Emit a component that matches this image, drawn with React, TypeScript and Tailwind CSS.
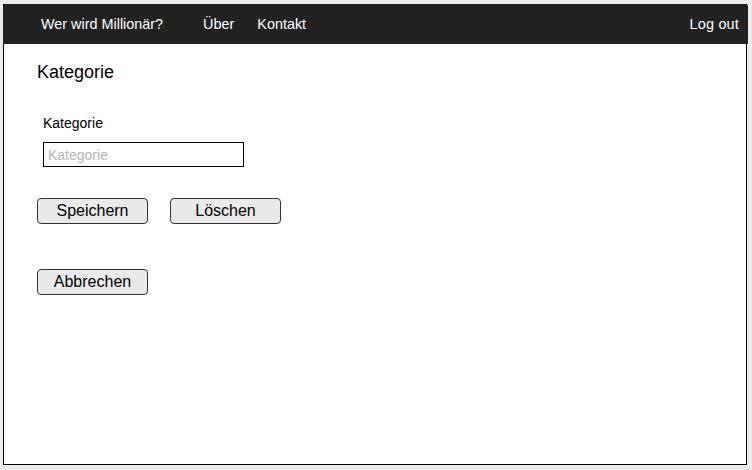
export default function App() {
  return (
    <div
      className="min-h-screen bg-[#ececec] pt-[4px] pl-[3px]"
      style={{ fontFamily: '"Liberation Sans", Arial, sans-serif' }}
    >
      <div className="w-[744px] h-[461px] border border-black bg-white">
        {/* Navbar */}
        <nav className="-mt-px -ml-px w-[745px] h-[40px] pt-[1px] bg-[#222222] rounded-t-[3px] flex items-center text-white text-[14.4px]">
          <a className="ml-[38px] cursor-pointer">Wer wird Millionär?</a>
          <a className="ml-[40px] cursor-pointer">Über</a>
          <a className="ml-[23px] cursor-pointer">Kontakt</a>
          <a className="ml-auto mr-[9px] cursor-pointer tracking-[0.2px]">Log out</a>
        </nav>

        <div className="pl-[33px]">
          <h1 className="mt-[17px] text-[18px] leading-[22px] text-black">Kategorie</h1>

          <div className="pl-[6px] mt-[32px]">
            <label className="block text-[14px] leading-[16px] text-black">Kategorie</label>
            <input
              type="text"
              placeholder="Kategorie"
              className="mt-[11px] w-[201px] h-[25px] border border-black px-[4px] text-[14px] placeholder:text-[#b5b5b5] outline-none"
            />
          </div>

          <div className="mt-[31px] flex gap-[22px]">
            <button className="w-[111px] h-[26px] border border-[#333] rounded-[4px] bg-[#e9e9e9] text-[16px] text-black">
              Speichern
            </button>
            <button className="w-[111px] h-[26px] border border-[#333] rounded-[4px] bg-[#e9e9e9] text-[16px] text-black">
              Löschen
            </button>
          </div>

          <div className="mt-[45px]">
            <button className="w-[111px] h-[26px] border border-[#333] rounded-[4px] bg-[#e9e9e9] text-[16px] text-black">
              Abbrechen
            </button>
          </div>
        </div>
      </div>
    </div>
  );
}
